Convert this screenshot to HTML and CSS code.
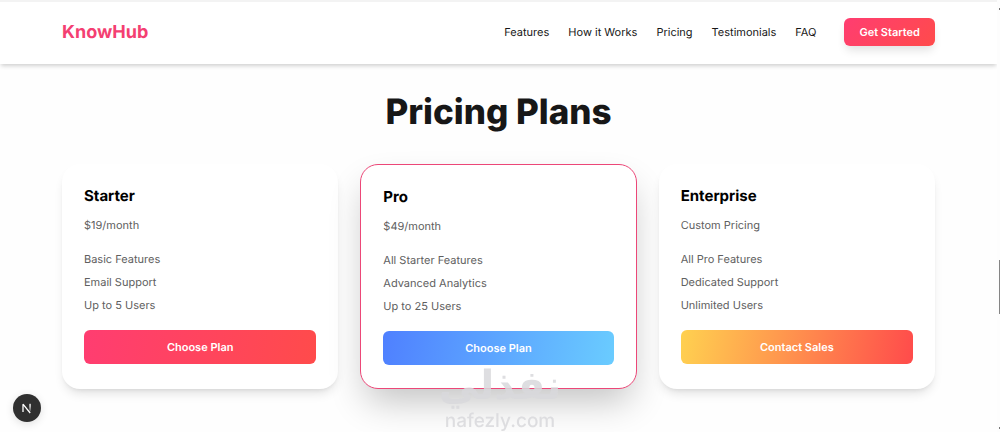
FILE: index.html
```html
<!DOCTYPE html>
<html lang="en">
<head>
  <meta charset="UTF-8">
  <meta name="viewport" content="width=device-width, initial-scale=1.0">
  <title>KnowHub</title>
  <link rel="stylesheet" href="styles.css">
</head>
<body>
  <header class="header">
    <div class="container header-inner">
      <a class="logo" href="#">KnowHub</a>
      <nav class="nav">
        <a href="#features">Features</a>
        <a href="#how">How it Works</a>
        <a href="#pricing">Pricing</a>
        <a href="#testimonials">Testimonials</a>
        <a href="#faq">FAQ</a>
      </nav>
      <button class="get-started">Get Started</button>
    </div>
  </header>

  <main class="container pricing" id="pricing">
    <h2 class="pricing-title">Pricing Plans</h2>
    <div class="plans">
      <article class="plan">
        <h3>Starter</h3>
        <p class="price">$19/month</p>
        <ul>
          <li>Basic Features</li>
          <li>Email Support</li>
          <li>Up to 5 Users</li>
        </ul>
        <button class="plan-button pink">Choose Plan</button>
      </article>
      <article class="plan featured">
        <h3>Pro</h3>
        <p class="price">$49/month</p>
        <ul>
          <li>All Starter Features</li>
          <li>Advanced Analytics</li>
          <li>Up to 25 Users</li>
        </ul>
        <button class="plan-button blue">Choose Plan</button>
      </article>
      <article class="plan">
        <h3>Enterprise</h3>
        <p class="price">Custom Pricing</p>
        <ul>
          <li>All Pro Features</li>
          <li>Dedicated Support</li>
          <li>Unlimited Users</li>
        </ul>
        <button class="plan-button orange">Contact Sales</button>
      </article>
    </div>
  </main>

  <div class="watermark">
    <span class="watermark-ar" lang="ar" dir="rtl">نفذلي</span>
    <span class="watermark-en">nafezly.com</span>
  </div>

  <button class="dev-badge" aria-label="Dev tools">
    <svg viewBox="0 0 28 28" width="28" height="28">
      <defs>
        <linearGradient id="fade" x1="0" y1="0" x2="0" y2="1">
          <stop offset="0.3" stop-color="#fff"/>
          <stop offset="1" stop-color="#fff" stop-opacity="0.2"/>
        </linearGradient>
      </defs>
      <path d="M10 18V10.2L17.2 19" fill="none" stroke="#fff" stroke-width="1.3" stroke-linejoin="bevel"/>
      <rect x="16.4" y="9.8" width="1.3" height="7.6" fill="url(#fade)"/>
    </svg>
  </button>

  <div class="scroll-rail">
    <span class="scroll-arrow"></span>
    <span class="scroll-thumb"></span>
    <span class="scroll-arrow"></span>
  </div>
</body>
</html>
```
FILE: styles.css
```css
* {
  margin: 0;
  padding: 0;
  box-sizing: border-box;
}

body {
  min-height: 100vh;
  padding-right: 3px;
  background: #fefefe;
  color: #171717;
  font-family: Inter, sans-serif;
  font-size: 11px;
  line-height: 17px;
  text-rendering: geometricPrecision;
  overflow: hidden;
}

button {
  border: none;
  color: #fff;
  font-family: inherit;
  font-size: 11px;
  font-weight: 600;
  text-rendering: inherit;
  cursor: pointer;
}

.container {
  padding-left: 62px;
  padding-right: 62px;
}

.header {
  background: #fff;
  border-top: 2px solid #f3f3f3;
  box-shadow: 0 3px 4px -1px rgba(0, 0, 0, 0.18);
}

.header-inner {
  display: flex;
  align-items: center;
  padding-top: 16px;
  padding-bottom: 18px;
}

.logo {
  margin-right: auto;
  color: #f43f72;
  font-size: 18px;
  font-weight: 700;
  text-decoration: none;
}

.nav {
  display: flex;
  gap: 19px;
  margin-right: 28px;
}

.nav a {
  color: #171717;
  text-decoration: none;
}

.get-started {
  height: 28px;
  padding: 0 15px;
  border-radius: 6px;
  background: linear-gradient(135deg, #ff3d71, #ff4b4b);
  box-shadow: 0 6px 10px -2px rgba(0, 0, 0, 0.12);
}

.pricing {
  padding-top: 28px;
}

.pricing-title {
  margin-bottom: 32px;
  font-size: 35px;
  font-weight: 800;
  line-height: 40px;
  text-align: center;
}

.plans {
  display: grid;
  grid-template-columns: repeat(3, 1fr);
  gap: 22px;
}

.plan {
  padding: 22px 22px 23px;
  border-radius: 18px;
  background: #fff;
  box-shadow: 0 7px 11px -3px rgba(0, 0, 0, 0.12), 0 3px 5px -3px rgba(0, 0, 0, 0.1);
}

.plan.featured {
  border: 1px solid #ec4778;
  box-shadow: 0 18px 36px -6px rgba(0, 0, 0, 0.24);
}

.plan h3 {
  margin-bottom: 11px;
  color: #000;
  font-size: 15px;
  font-weight: 700;
  line-height: 20px;
}

.price {
  margin-bottom: 17px;
  color: #606060;
}

.plan ul {
  display: flex;
  flex-direction: column;
  gap: 6px;
  margin-bottom: 16px;
  color: #606060;
  list-style: none;
}

.plan-button {
  width: 100%;
  height: 34px;
  border-radius: 6px;
}

.pink {
  background: linear-gradient(100deg, #ff3d71, #ff4b4b);
}

.blue {
  background: linear-gradient(100deg, #4f80ff, #6accff);
}

.orange {
  background: linear-gradient(100deg, #ffd150, #ff4b4b);
}

.watermark {
  position: fixed;
  left: 0;
  right: 0;
  bottom: 0;
  display: flex;
  flex-direction: column;
  align-items: center;
  color: #d9d9dc;
  opacity: 0.85;
  pointer-events: none;
}

.watermark-ar {
  font-family: "DejaVu Sans", sans-serif;
  font-size: 40px;
  font-weight: 700;
  line-height: 48px;
}

.watermark-en {
  font-size: 19px;
  font-weight: 500;
  line-height: 22px;
}

.dev-badge {
  position: fixed;
  left: 13px;
  bottom: 10px;
  width: 28px;
  height: 28px;
  border-radius: 50%;
  background: #303030;
  box-shadow: 0 2px 8px rgba(0, 0, 0, 0.12);
}

.dev-badge svg {
  display: block;
}

.scroll-rail {
  position: fixed;
  top: 0;
  right: 0;
  bottom: 0;
  display: flex;
  flex-direction: column;
  align-items: flex-end;
  justify-content: space-between;
  width: 3px;
  padding: 8px 0 3px;
  background: #fdfdfd;
}

.scroll-thumb {
  width: 1px;
  height: 54px;
  margin-top: 250px;
  margin-bottom: auto;
  background: #858585;
}

.scroll-arrow {
  width: 1px;
  height: 2px;
  background: #777;
}
```
